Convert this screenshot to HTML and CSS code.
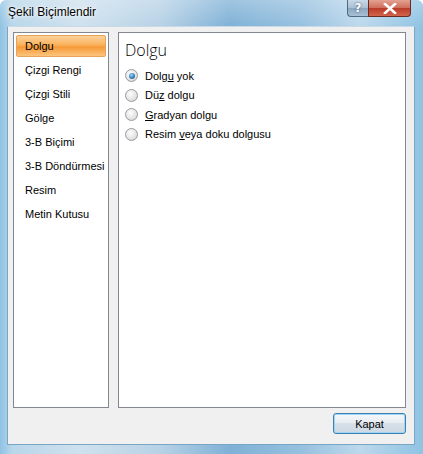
FILE: index.html
```html
<!DOCTYPE html>
<html lang="tr">
<head>
    <meta charset="UTF-8">
    <title>Şekil Biçimlendir</title>
    <link rel="stylesheet" href="styles.css">
</head>
<body>
    <div class="window">
        <div class="titlebar">
            <span class="title">Şekil Biçimlendir</span>
            <div class="controls">
                <span class="btn-help">?</span>
                <span class="btn-close">
                    <svg width="14" height="11" viewBox="0 0 14 11">
                        <path d="M2 1 L12 10 M12 1 L2 10" stroke="#fff" stroke-width="2.6" stroke-linecap="square"/>
                    </svg>
                </span>
            </div>
        </div>
        <div class="client">
            <div class="panes">
                <ul class="nav">
                    <li class="selected">Dolgu</li>
                    <li>Çizgi Rengi</li>
                    <li>Çizgi Stili</li>
                    <li>Gölge</li>
                    <li>3-B Biçimi</li>
                    <li>3-B Döndürmesi</li>
                    <li>Resim</li>
                    <li>Metin Kutusu</li>
                </ul>
                <div class="content">
                    <h2>Dolgu</h2>
                    <div class="option"><span class="radio checked"></span><span>Dolg<u>u</u> yok</span></div>
                    <div class="option"><span class="radio"></span><span>Dü<u>z</u> dolgu</span></div>
                    <div class="option"><span class="radio"></span><span><u>G</u>radyan dolgu</span></div>
                    <div class="option"><span class="radio"></span><span>Resim <u>v</u>eya doku dolgusu</span></div>
                </div>
            </div>
            <div class="footer">
                <button class="close-button">Kapat</button>
            </div>
        </div>
    </div>
</body>
</html>
```

FILE: styles.css
```css
body {
    margin: 0;
    font-family: "Liberation Sans", Arial, sans-serif;
    font-size: 11px;
    color: #000;
}
.window {
    width: 423px;
    height: 454px;
    display: flex;
    flex-direction: column;
    box-sizing: border-box;
    background:
        linear-gradient(180deg, rgba(255,255,255,0.25) 0, rgba(255,255,255,0) 27px),
        linear-gradient(90deg, #8fc3e3 0, #b8d6ea 12px, #cfe1ee 80px, #b7d2e6 160px, #7fb1d6 230px, #96c0df 300px, #bcd8ec 360px, #8fc3e3 423px);
    border-radius: 6px 6px 0 0;
}
.titlebar {
    height: 27px;
    display: flex;
    justify-content: space-between;
    align-items: flex-start;
    padding: 0 12px 0 8px;
}
.title {
    font-size: 12px;
    line-height: 24px;
    color: #000;
    text-shadow: 0 0 6px #fff, 0 0 3px #fff;
}
.controls {
    display: flex;
}
.btn-help {
    width: 21px;
    height: 17px;
    box-sizing: border-box;
    border: 1px solid #4d6a85;
    border-top: none;
    border-right: none;
    border-radius: 0 0 0 4px;
    background: linear-gradient(180deg, #c9d9e7 0, #a9bfd3 50%, #8aa5bd 51%, #a8c1d6 100%);
    color: #fff;
    font-family: "DejaVu Sans", sans-serif;
    font-weight: bold;
    font-size: 12px;
    line-height: 16px;
    text-align: center;
    text-shadow: 0 0 2px #2b4158;
}
.btn-close {
    width: 43px;
    height: 17px;
    box-sizing: border-box;
    border: 1px solid #6b2a22;
    border-top: none;
    border-radius: 0 0 4px 0;
    background: linear-gradient(180deg, #e3a293 0, #d06d5b 50%, #b93a27 51%, #d4654d 100%);
    display: flex;
    align-items: center;
    justify-content: center;
}
.client {
    flex: 1;
    margin: 0 8px 9px 7px;
    background: #f0f0f0;
    border: 1px solid #7aa6c6;
    border-top-color: #c9dae7;
    padding: 5px 8px 10px 5px;
    display: flex;
    flex-direction: column;
}
.panes {
    display: flex;
    gap: 9px;
    height: 376px;
}
.nav {
    list-style: none;
    margin: 0;
    width: 96px;
    box-sizing: border-box;
    padding: 2px;
    background: #fff;
    border: 1px solid #828790;
    display: flex;
    flex-direction: column;
    gap: 2px;
}
.nav li {
    height: 22px;
    line-height: 23px;
    padding-left: 9px;
    white-space: nowrap;
}
.nav li.selected {
    background: linear-gradient(180deg, #fbd29a 0, #f9b25c 45%, #f79a36 55%, #fbc47e 100%);
    border: 1px solid #e5a45a;
    box-sizing: border-box;
    border-radius: 2px;
    padding-left: 8px;
    line-height: 21px;
}
.content {
    flex: 1;
    background: #fff;
    border: 1px solid #828790;
    padding: 6px 6px;
}
.content h2 {
    margin: 0 0 5px;
    font-family: "Open Sans", sans-serif;
    font-weight: 300;
    font-size: 16px;
    line-height: 22px;
}
.option {
    display: flex;
    align-items: center;
    height: 19.5px;
    white-space: nowrap;
}
.radio {
    width: 11px;
    height: 11px;
    border-radius: 50%;
    border: 1px solid #9a9a9a;
    background: radial-gradient(circle at 40% 35%, #fdfdfd 0, #e3e3e3 60%, #cfcfcf 100%);
    margin-right: 7px;
    position: relative;
}
.radio.checked::after {
    content: "";
    position: absolute;
    left: 2.5px;
    top: 2.5px;
    width: 6px;
    height: 6px;
    border-radius: 50%;
    background: radial-gradient(circle at 40% 35%, #9fd2f4 0, #2a79b8 60%, #1b4f86 100%);
}
.footer {
    display: flex;
    justify-content: flex-end;
    margin-top: 5px;
}
.close-button {
    width: 73px;
    height: 21px;
    font-family: inherit;
    font-size: 11px;
    border: 1px solid #3c7fb1;
    border-radius: 3px;
    background: linear-gradient(180deg, #f4f7fa 0, #e9eef3 45%, #d8e1ea 50%, #cdd8e3 100%);
    box-shadow: inset 0 0 0 1px #9fd5f5;
    padding: 0;
}
```
